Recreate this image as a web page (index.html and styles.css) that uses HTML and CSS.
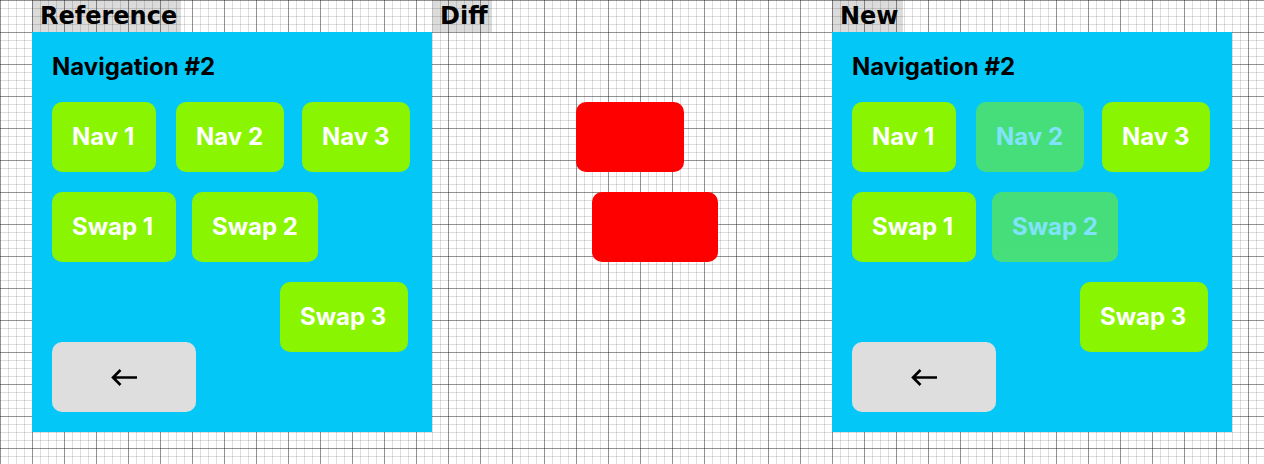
FILE: index.html
```html
<!DOCTYPE html>
<html lang="en">
<head>
<meta charset="utf-8">
<title>Navigation #2</title>
<link rel="stylesheet" href="styles.css">
</head>
<body>
<main class="board">
  <section class="column">
    <h2 class="label">Reference</h2>
    <div class="panel">
      <h1 class="title">Navigation #2</h1>
      <nav class="row row-nav">
        <button class="button nav-first">Nav 1</button>
        <button class="button nav-item">Nav 2</button>
        <button class="button nav-item">Nav 3</button>
      </nav>
      <div class="row row-swap">
        <button class="button swap-first">Swap 1</button>
        <button class="button swap-second">Swap 2</button>
      </div>
      <div class="footer">
        <button class="button back" aria-label="Back">
          <svg class="arrow" viewBox="0 0 28 30" aria-hidden="true"><path d="M27 15.500H3M10.500 8L3 15.500L10.500 23"/></svg>
        </button>
        <button class="button swap-third">Swap 3</button>
      </div>
    </div>
  </section>
  <section class="column">
    <h2 class="label">Diff</h2>
    <div class="panel diff">
      <div class="row row-nav"><div class="change nav-item"></div></div>
      <div class="row row-swap"><div class="change swap-second"></div></div>
    </div>
  </section>
  <section class="column">
    <h2 class="label">New</h2>
    <div class="panel">
      <h1 class="title">Navigation #2</h1>
      <nav class="row row-nav">
        <button class="button nav-first">Nav 1</button>
        <button class="button nav-item faded">Nav 2</button>
        <button class="button nav-item">Nav 3</button>
      </nav>
      <div class="row row-swap">
        <button class="button swap-first">Swap 1</button>
        <button class="button swap-second faded">Swap 2</button>
      </div>
      <div class="footer">
        <button class="button back" aria-label="Back">
          <svg class="arrow" viewBox="0 0 28 30" aria-hidden="true"><path d="M27 15.500H3M10.500 8L3 15.500L10.500 23"/></svg>
        </button>
        <button class="button swap-third">Swap 3</button>
      </div>
    </div>
  </section>
</main>
</body>
</html>
```
FILE: styles.css
```css
* { box-sizing: border-box; }
body {
  margin: 0;
  min-height: 100vh;
  font-family: Inter, sans-serif;
  background-color: #fff;
  background-image:
    linear-gradient(to right, rgba(0, 0, 0, .34) 1px, transparent 1px),
    linear-gradient(to bottom, rgba(0, 0, 0, .34) 1px, transparent 1px),
    linear-gradient(to right, rgba(0, 0, 0, .13) 1px, transparent 1px),
    linear-gradient(to bottom, rgba(0, 0, 0, .13) 1px, transparent 1px);
  background-size: 32px 32px, 32px 32px, 8px 8px, 8px 8px;
}
.board {
  display: grid;
  grid-template-columns: repeat(3, 1fr);
  padding: 0 32px 32px;
}
.column {
  display: flex;
  flex-direction: column;
  min-width: 0;
}
.label {
  align-self: flex-start;
  margin: 0;
  padding: 0 4px 0 8px;
  background: rgba(0, 0, 0, .14);
  font: bold 24px/32px "DejaVu Sans", sans-serif;
}
.panel {
  display: flex;
  flex-direction: column;
  gap: 20px;
  padding: 20px;
  background: #03c8f7;
}
.diff {
  padding-top: 70px;
  background: none;
}
.title {
  margin: 0;
  font-size: 24px;
  font-weight: 700;
  line-height: 30px;
}
.row {
  display: grid;
  justify-items: start;
}
.row-nav { grid-template-columns: 124px 126px 1fr; }
.row-swap { grid-template-columns: 140px 1fr; }
.button {
  padding: 20px;
  border: 0;
  border-radius: 10px;
  background: #89f500;
  color: #fff;
  font: 700 24px/30px Inter, sans-serif;
  text-align: left;
  white-space: nowrap;
}
.nav-first { width: 104px; }
.nav-item { width: 108px; }
.swap-first { width: 124px; }
.swap-second { width: 126px; }
.swap-third { width: 128px; }
.faded { opacity: .5; }
.footer {
  display: flex;
  justify-content: space-between;
  align-items: flex-start;
  padding-right: 4px;
}
.back {
  width: 144px;
  margin-top: 60px;
  background: #dedede;
  color: #000;
}
.arrow {
  display: block;
  width: 28px;
  height: 30px;
  margin: 0 auto;
  fill: none;
  stroke: currentColor;
  stroke-width: 2.6;
}
.change {
  grid-column: 2;
  height: 70px;
  border-radius: 10px;
  background: #f00;
}
```
